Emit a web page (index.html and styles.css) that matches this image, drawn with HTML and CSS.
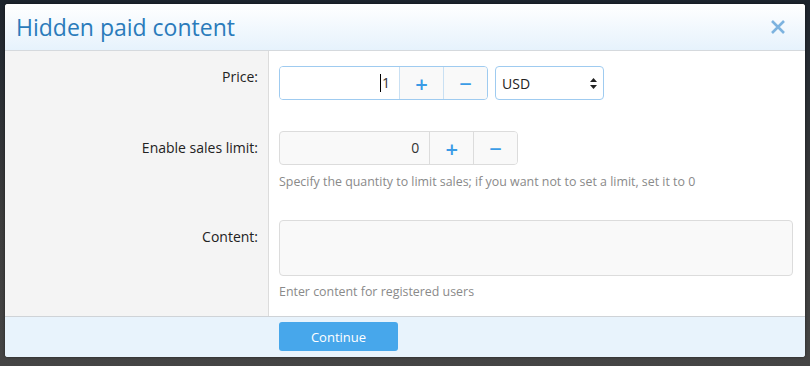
FILE: index.html
```html
<!DOCTYPE html>
<html>
<head>
  <title>Hidden paid content</title>
  <link rel="stylesheet" href="styles.css">
</head>
<body>

  <div class="dialog">
    <div class="dialog-head">
      <h2 class="dialog-title">Hidden paid content</h2>
      <svg class="close" width="16" height="16" viewBox="0 0 16 16">
        <path d="M2 2 L14 14 M14 2 L2 14" stroke="#7db3df" stroke-width="2.6" fill="none" />
      </svg>
    </div>

    <div class="form">
      <label class="form-label first">Price:</label>
      <div class="form-field first">
        <div class="row">
          <div class="spinner active">
            <div class="spin-value wide"><span class="caret"></span>1</div>
            <button class="spin-btn">+</button>
            <button class="spin-btn">&minus;</button>
          </div>
          <div class="select">
            <span>USD</span>
            <svg width="7" height="11" viewBox="0 0 7 11">
              <path d="M3.5 0 L7 4 L0 4 Z M0 7 L7 7 L3.5 11 Z" fill="#222" />
            </svg>
          </div>
        </div>
      </div>

      <label class="form-label">Enable sales limit:</label>
      <div class="form-field">
        <div class="spinner">
          <div class="spin-value">0</div>
          <button class="spin-btn">+</button>
          <button class="spin-btn">&minus;</button>
        </div>
        <div class="hint">Specify the quantity to limit sales; if you want not to set a limit, set it to 0</div>
      </div>

      <label class="form-label">Content:</label>
      <div class="form-field last">
        <div class="textarea"></div>
        <div class="hint">Enter content for registered users</div>
      </div>
    </div>

    <div class="dialog-foot">
      <button class="continue">Continue</button>
    </div>
  </div>

</body>
</html>
```

FILE: styles.css
```css
body {
  margin: 0;
  height: 366px;
  overflow: hidden;
  font-family: "Open Sans", Arial, sans-serif;
  background: linear-gradient(#1d242d, #3c3c3c 60%, #454545);
}
.dialog {
  margin: 4px 5px;
  width: 800px;
  background: #fff;
  border-radius: 3px;
  overflow: hidden;
  box-shadow: 0 0 3px rgba(0, 0, 0, 0.5);
}
.dialog-head {
  height: 46px;
  display: flex;
  align-items: center;
  justify-content: space-between;
  padding: 0 19px 0 11px;
  background: linear-gradient(#ffffff, #e6f2fc);
  border-bottom: 1px solid #d5d9dd;
}
.dialog-title {
  margin: 0;
  font-size: 23px;
  font-weight: normal;
  color: #2a7bbb;
}
.form {
  display: grid;
  grid-template-columns: 264px 1fr;
}
.form-label {
  background: #f4f4f4;
  border-right: 1px solid #dcdcdc;
  text-align: right;
  padding: 24px 10px 0 0;
  font-size: 14px;
  line-height: 18px;
  color: #222;
}
.form-label.first {
  padding-top: 17px;
}
.form-field {
  padding: 16px 12px 13px 10px;
}
.form-field.first {
  padding-top: 15px;
  padding-bottom: 15px;
}
.form-field.last {
  padding-bottom: 15px;
}
.row {
  display: flex;
  gap: 7px;
}
.spinner {
  display: flex;
  width: 237px;
  height: 32px;
  border: 1px solid #dcdcdc;
  border-radius: 4px;
  background: #f9f9f9;
  overflow: hidden;
}
.spinner.active {
  width: 207px;
  border-color: #9fcbf0;
}
.spin-value {
  width: 140px;
  padding-right: 10px;
  text-align: right;
  font-size: 14px;
  line-height: 32px;
  color: #333;
}
.spin-value.wide {
  width: 110px;
  padding-right: 9px;
  background: #fff;
}
.caret {
  display: inline-block;
  width: 1px;
  height: 18px;
  margin-right: 1px;
  vertical-align: -4px;
  background: #000;
}
.spin-btn {
  width: 44px;
  border: 0;
  border-left: 1px solid #dcdcdc;
  background: #f9f9f9;
  color: #3b9be6;
  font-family: "Open Sans", Arial, sans-serif;
  font-size: 22px;
  font-weight: 600;
  line-height: 1;
  padding: 0;
}
.spinner.active .spin-btn {
  border-left-color: #c9e0f3;
}
.select {
  width: 95px;
  height: 32px;
  padding: 0 6px;
  display: flex;
  align-items: center;
  justify-content: space-between;
  border: 1px solid #9fcbf0;
  border-radius: 4px;
  background: #fff;
  font-size: 14px;
  color: #222;
}
.hint {
  margin-top: 8px;
  font-size: 12.4px;
  line-height: 18px;
  color: #8a8a8a;
}
.textarea {
  height: 54px;
  border: 1px solid #dcdcdc;
  border-radius: 4px;
  background: #f9f9f9;
}
.textarea + .hint {
  margin-top: 7px;
}
.dialog-foot {
  height: 41px;
  padding: 5px 0 0 274px;
  box-sizing: border-box;
  border-top: 1px solid #cfd3d7;
  background: #e8f3fc;
}
.continue {
  width: 119px;
  height: 29px;
  border: 0;
  border-radius: 3px;
  background: #47a7eb;
  color: #fff;
  font-family: "Open Sans", Arial, sans-serif;
  font-size: 13px;
}
```
